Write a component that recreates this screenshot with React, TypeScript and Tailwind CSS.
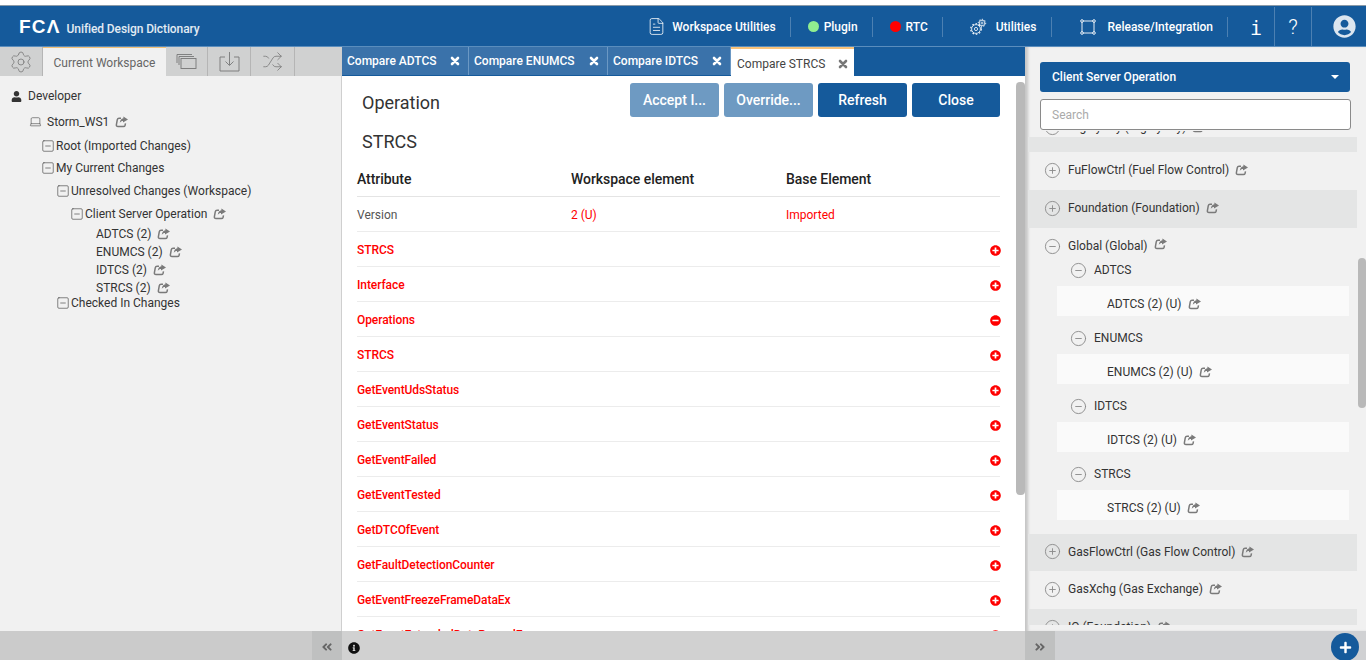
import { CircleMinus, CirclePlus, FileText, Laptop, Settings, Shuffle, SquareMinus } from "lucide-react";
import {
  FaAngleDoubleLeft,
  FaAngleDoubleRight,
  FaInfoCircle,
  FaMinusCircle,
  FaPlus,
  FaPlusCircle,
  FaUser,
  FaUserCircle,
} from "react-icons/fa";

const Share = () => (
  <svg width="13" height="12" viewBox="0 0 13 12" className="ml-[6px] shrink-0 text-[#7a7a7a]">
    <path d="M6 2.2H4C2.9 2.2 2.5 2.8 2.3 3.6L1.4 8.6C1.2 9.8 1.8 10.5 3 10.5H8.4C9.4 10.5 9.9 10 10.1 9.2L10.5 7.4" fill="none" stroke="currentColor" strokeWidth="1.5" />
    <path d="M8.4 0.4L13 3.4L8 6.6V5C6.6 5 5.6 5.6 4.8 7C4.9 4.4 6.2 2.6 8.4 2.3Z" fill="currentColor" />
  </svg>
);

const Cross = ({ className }: { className: string }) => (
  <svg width="10" height="10" viewBox="0 0 10 10" className={className}>
    <path d="M2 2L8 8M8 2L2 8" fill="none" stroke="currentColor" strokeWidth="2.6" strokeLinecap="round" />
  </svg>
);

const Divider = () => <div className="h-[20px] w-px bg-[#4c80b2]" />;

const TreeRow = ({ label, indent, height, share }: { label: string; indent: string; height: string; share?: boolean }) => (
  <div className={`flex items-center ${indent} ${height}`}>
    <SquareMinus size={14} strokeWidth={1.1} className="-ml-[2px] mr-[1px] text-[#444]" />
    <span>{label}</span>
    {share && <Share />}
  </div>
);

const LeafRow = ({ label }: { label: string }) => (
  <div className="flex h-[18px] items-center pl-[96px]">
    <span>{label}</span>
    <Share />
  </div>
);

const CompareTab = ({ label, width }: { label: string; width: string }) => (
  <div className={`flex h-full items-center justify-between border-r border-[#6b98c4] bg-[#3a72aa] pl-[5px] pr-[8px] text-[12px] font-medium text-white ${width}`}>
    <span>{label}</span>
    <Cross className="text-white" />
  </div>
);

const DiffRow = ({ label, minus }: { label: string; minus?: boolean }) => (
  <div className="flex h-[35px] shrink-0 items-center justify-between border-b border-[#ececec] pt-[2px] text-[12px] font-medium tracking-[-0.08px] text-[#ff0000]">
    <span>{label}</span>
    {minus ? <FaMinusCircle className="-mr-[1px] text-[11px] text-[#ff0000]" /> : <FaPlusCircle className="-mr-[1px] text-[11px] text-[#ff0000]" />}
  </div>
);

const ModuleRow = ({ label, dark, height }: { label: string; dark?: boolean; height: string }) => (
  <div className={`flex shrink-0 items-center pb-[2px] pl-[16px] ${height} ${dark ? "bg-[#e4e5e5]" : ""}`}>
    <CirclePlus size={17} strokeWidth={1.3} className="mr-[7px] text-[#8a8a8a]" />
    <span>{label}</span>
    <Share />
  </div>
);

const SubGroup = ({ name, leaf }: { name: string; leaf: string }) => (
  <div>
    <div className="flex h-[32px] items-center pl-[42px]">
      <CircleMinus size={17} strokeWidth={1.3} className="mr-[7px] text-[#8a8a8a]" />
      <span>{name}</span>
    </div>
    <div className="ml-[29px] flex h-[30px] w-[292px] items-center bg-[#fafafa] pt-[6px] pl-[50px]">
      <span>{leaf}</span>
      <Share />
    </div>
    <div className="h-[6px]" />
  </div>
);

const diffRows = [
  "STRCS",
  "Interface",
  "Operations",
  "STRCS",
  "GetEventUdsStatus",
  "GetEventStatus",
  "GetEventFailed",
  "GetEventTested",
  "GetDTCOfEvent",
  "GetFaultDetectionCounter",
  "GetEventFreezeFrameDataEx",
  "GetEventExtendedDataRecordEx",
];

export default function App() {
  return (
    <div className="flex h-[660px] w-[1366px] flex-col overflow-hidden bg-white font-['Roboto',sans-serif] text-[12px] text-[#333]">
      <div className="h-[5px] shrink-0 bg-white" />
      {/* top bar */}
      <header className="flex h-[42px] shrink-0 items-center border-y border-[#8a9aa8] border-b-[#5a8dbd] bg-[#155a9b] text-white">
        <div className="ml-[19px] flex items-baseline pt-[2px]">
          <span className="font-['Liberation_Sans',sans-serif] text-[19px] leading-none font-bold tracking-[1.2px]">FCΛ</span>
          <span className="ml-[6px] text-[12px] font-medium tracking-[-0.1px] text-[#e2ebf3]">Unified Design Dictionary</span>
        </div>
        <div className="ml-auto flex h-full items-center pt-[1px] text-[12px] font-medium">
          <FileText size={19} strokeWidth={1} className="mr-[6px]" />
          <span className="mr-[14px]">Workspace Utilities</span>
          <Divider />
          <span className="ml-[17px] mr-[5px] h-[11px] w-[11px] rounded-full bg-[#90ee90]" />
          <span className="mr-[14px]">Plugin</span>
          <Divider />
          <span className="ml-[17px] mr-[5px] h-[11px] w-[11px] rounded-full bg-[#ff0000]" />
          <span className="mr-[14px]">RTC</span>
          <Divider />
          <svg width="18" height="18" viewBox="0 0 18 18" fill="none" stroke="currentColor" className="ml-[26px] mr-[9px]">
            <circle cx="7" cy="11" r="4.4" strokeWidth="0.8" />
            <circle cx="7" cy="11" r="5.3" strokeWidth="1.1" strokeDasharray="1.6 1.8" />
            <circle cx="7" cy="11" r="1.6" strokeWidth="0.8" />
            <circle cx="13" cy="5" r="2.8" strokeWidth="0.8" />
            <circle cx="13" cy="5" r="3.7" strokeWidth="1" strokeDasharray="1.3 1.5" />
            <circle cx="13" cy="5" r="1" strokeWidth="0.7" />
          </svg>
          <span className="mr-[15px]">Utilities</span>
          <Divider />
          <svg width="16" height="16" viewBox="0 0 16 16" fill="none" stroke="currentColor" strokeWidth="0.9" className="ml-[28px] mr-[11px]">
            <path d="M3 2h10M3 14h10M2 3v10M14 3v10" />
            <circle cx="2" cy="2" r="1.3" />
            <circle cx="14" cy="2" r="1.3" />
            <circle cx="2" cy="14" r="1.3" />
            <circle cx="14" cy="14" r="1.3" />
          </svg>
          <span className="mr-[14px]">Release/Integration</span>
          <Divider />
          <div className="flex h-full w-[47px] items-center justify-center border-r border-[#4c80b2] pt-[2px] pl-[10px] font-['DejaVu_Sans_Mono',monospace] text-[20px]">i</div>
          <div className="flex h-full w-[37px] items-center justify-center border-r border-[#4c80b2] pt-[2px] text-[21px] font-light">?</div>
          <div className="flex h-full w-[54px] items-center justify-end pr-[10px]">
            <FaUserCircle className="text-[23px] text-[#dbe5ef]" />
          </div>
        </div>
      </header>

      <div className="flex min-h-0 flex-1">
        {/* left panel */}
        <aside className="flex w-[341px] shrink-0 flex-col bg-[#f1f1f1]">
          <div className="flex h-[29px] shrink-0 bg-[#d0d1d1] text-[#777]">
            <div className="flex w-[43px] items-center justify-center border-r border-[#b5b5b5]">
              <Settings size={24} strokeWidth={0.8} />
            </div>
            <div className="flex w-[123px] items-center justify-center border-t border-[#f0c078] bg-[#f1f1f1] pt-[1px] text-[12px] text-[#666]">
              Current Workspace
            </div>
            <div className="flex w-[42px] items-center justify-center border-r border-[#b5b5b5]">
              <svg width="21" height="17" viewBox="0 0 21 17" fill="none" stroke="currentColor" strokeWidth="0.9">
                <path d="M1 10V1.5h15M3 12V3.5h15" />
                <rect x="5" y="5.5" width="15" height="10" />
              </svg>
            </div>
            <div className="flex w-[43px] items-center justify-center border-r border-[#b5b5b5]">
              <svg width="21" height="21" viewBox="0 0 21 21" fill="none" stroke="currentColor" strokeWidth="0.9">
                <path d="M6 6H1v14h19V6h-5M10.5 1v13M6.5 10.5l4 4 4-4" />
              </svg>
            </div>
            <div className="flex w-[44px] items-center justify-center border-r border-[#b5b5b5]">
              <Shuffle size={21} strokeWidth={0.9} />
            </div>
          </div>
          <div className="flex flex-col pt-[8px]">
            <div className="flex h-[24px] items-center pl-[11px]">
              <FaUser className="mr-[6px] text-[11px] text-[#333]" />
              <span>Developer</span>
            </div>
            <div className="flex h-[27px] items-center pl-[29px]">
              <Laptop size={13} strokeWidth={1} className="mr-[5px]" />
              <span>Storm_WS1</span>
              <Share />
            </div>
            <TreeRow label="Root (Imported Changes)" indent="pl-[43px]" height="h-[21px]" />
            <TreeRow label="My Current Changes" indent="pl-[43px]" height="h-[24px]" />
            <TreeRow label="Unresolved Changes (Workspace)" indent="pl-[58px]" height="h-[22px]" />
            <TreeRow label="Client Server Operation" indent="pl-[72px]" height="h-[23px]" share />
            <LeafRow label="ADTCS (2)" />
            <LeafRow label="ENUMCS (2)" />
            <LeafRow label="IDTCS (2)" />
            <LeafRow label="STRCS (2)" />
            <TreeRow label="Checked In Changes" indent="pl-[58px]" height="h-[12px]" />
          </div>
        </aside>

        <div className="w-px shrink-0 bg-[#cfcfcf]" />

        {/* compare panel */}
        <main className="relative flex w-[683px] shrink-0 flex-col overflow-hidden bg-white">
          <div className="flex h-[29px] shrink-0 items-stretch bg-[#155a9b]">
            <div className="h-[28px]"><CompareTab label="Compare ADTCS" width="w-[127px]" /></div>
            <div className="h-[28px]"><CompareTab label="Compare ENUMCS" width="w-[139px]" /></div>
            <div className="h-[28px]"><CompareTab label="Compare IDTCS" width="w-[123px]" /></div>
            <div className="flex h-[29px] w-[123px] items-center justify-between border-t-2 border-[#f9c37a] bg-white pt-[2px] pl-[6px] pr-[6px] text-[#444]">
              <span>Compare STRCS</span>
              <Cross className="text-[#777]" />
            </div>
          </div>
          <div className="flex h-[43px] shrink-0 items-start pt-[7px] pr-[25px] pl-[20px]">
            <span className="pt-[9px] text-[18px] leading-[22px] text-[#333]">Operation</span>
            <div className="ml-auto flex gap-[5px] text-[14px] font-medium text-white">
              <div className="flex h-[34px] w-[89px] items-center justify-center rounded-[3px] bg-[#6e9ac2]">Accept I...</div>
              <div className="flex h-[34px] w-[89px] items-center justify-center rounded-[3px] bg-[#6e9ac2]">Override...</div>
              <div className="flex h-[34px] w-[89px] items-center justify-center rounded-[3px] bg-[#155a9b]">Refresh</div>
              <div className="flex h-[34px] w-[88px] items-center justify-center rounded-[3px] bg-[#155a9b]">Close</div>
            </div>
          </div>
          <div className="shrink-0 pl-[20px] pt-[12px] text-[18px] leading-[22px]">STRCS</div>
          <div className="flex min-h-0 flex-1 flex-col pr-[25px] pl-[15px] pt-[8px]">
            <div className="flex h-[36px] shrink-0 items-center border-b border-[#e4e4e4] pt-[2px] text-[14px] font-medium tracking-[-0.05px] text-[#222]">
              <span className="w-[214px]">Attribute</span>
              <span className="w-[215px]">Workspace element</span>
              <span>Base Element</span>
            </div>
            <div className="flex h-[35px] shrink-0 items-center border-b border-[#ececec] pt-[2px] text-[#555]">
              <span className="w-[214px]">Version</span>
              <span className="w-[215px] text-[#ff0000]">2 (U)</span>
              <span className="text-[#ff0000]">Imported</span>
            </div>
            {diffRows.map((row, i) => (
              <DiffRow key={i} label={row} minus={row === "Operations"} />
            ))}
          </div>
          {/* scrollbar */}
          <div className="absolute top-[35px] right-0 h-[413px] w-[9px] rounded-[4px] bg-[#b9b9b9]" />
        </main>

        {/* right panel */}
        <aside className="relative flex min-w-0 flex-1 flex-col bg-[#f1f1f1] shadow-[inset_4px_0_3px_-1px_rgba(0,0,0,0.18)]">
          <div className="ml-[15px] mr-[16px] mt-[15px] flex h-[30px] shrink-0 items-center justify-between rounded-[3px] bg-[#155a9b] pl-[12px] pr-[11px] font-medium text-white">
            <span>Client Server Operation</span>
            <span className="h-0 w-0 border-x-[4px] border-t-[4px] border-x-transparent border-t-white" />
          </div>
          <div className="ml-[15px] mr-[15px] mt-[7px] flex h-[31px] shrink-0 items-center rounded-[3px] border border-[#8a8a8a] bg-white pt-[1px] pl-[11px] text-[#aaa]">
            Search
          </div>
          <div className="mt-[1px] mr-[9px] ml-[3px] flex h-[494px] flex-col overflow-hidden">
            <div className="h-[6px] shrink-0 overflow-hidden">
              <div className="-mt-[22px] flex h-[36px] items-center pl-[16px]">
                <CirclePlus size={17} strokeWidth={1.3} className="mr-[7px] text-[#8a8a8a]" />
                <span>HighlyAny (HighlyAny)</span>
                <Share />
              </div>
            </div>
            <div className="h-[15px] shrink-0 bg-[#e4e5e5]" />
            <ModuleRow label="FuFlowCtrl (Fuel Flow Control)" height="h-[38px]" />
            <ModuleRow label="Foundation (Foundation)" height="h-[38px]" dark />
            <div className="flex h-[26px] shrink-0 items-start pt-[10px] pl-[16px] leading-[16px]">
              <CircleMinus size={17} strokeWidth={1.3} className="mr-[7px] text-[#8a8a8a]" />
              <span>Global (Global)</span>
              <Share />
            </div>
            <SubGroup name="ADTCS" leaf="ADTCS (2) (U)" />
            <SubGroup name="ENUMCS" leaf="ENUMCS (2) (U)" />
            <SubGroup name="IDTCS" leaf="IDTCS (2) (U)" />
            <SubGroup name="STRCS" leaf="STRCS (2) (U)" />
            <div className="h-[8px] shrink-0" />
            <ModuleRow label="GasFlowCtrl (Gas Flow Control)" height="h-[37px]" dark />
            <ModuleRow label="GasXchg (Gas Exchange)" height="h-[38px]" />
            <ModuleRow label="IO (Foundation)" height="h-[38px]" dark />
          </div>
          <div className="absolute top-[211px] right-0 h-[150px] w-[8px] rounded-[4px] bg-[#b9b9b9]" />
        </aside>
      </div>

      {/* bottom bar */}
      <footer className="flex h-[29px] shrink-0 items-center bg-[#d1d1d1]">
        <div className="h-full w-[312px] bg-[#cbcbcb]" />
        <div className="flex h-full w-[30px] items-center justify-center bg-[#bfc0c0] pt-[2px] text-[#666]">
          <FaAngleDoubleLeft className="text-[12px]" />
        </div>
        <div className="flex h-full w-[683px] items-center pt-[4px] pl-[6px]">
          <FaInfoCircle className="text-[12px] text-[#111]" />
        </div>
        <div className="flex h-full w-[30px] items-center justify-center bg-[#bfc0c0] pt-[2px] text-[#666]">
          <FaAngleDoubleRight className="text-[12px]" />
        </div>
        <div className="flex h-full flex-1 items-center justify-end bg-[#d0d1d3] pr-[7px]">
          <div className="mt-[3px] flex h-[28px] w-[28px] shrink-0 items-center justify-center rounded-full bg-[#155a9b]">
            <FaPlus className="text-[13px] text-white" />
          </div>
        </div>
      </footer>
    </div>
  );
}
